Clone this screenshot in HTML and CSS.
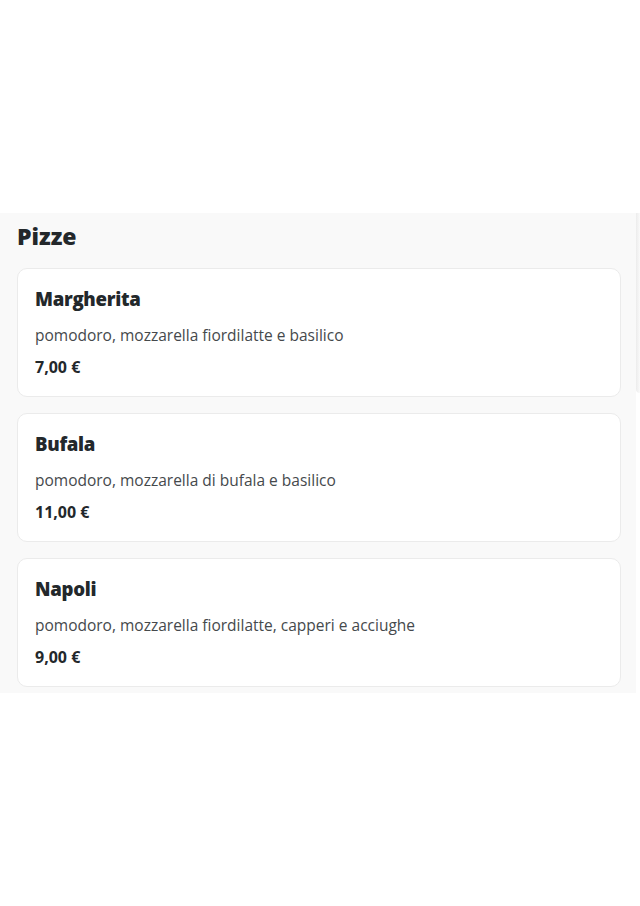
FILE: index.html
```html
<!DOCTYPE html>
<html lang="it">
<head>
<meta charset="utf-8">
<title>Pizze</title>
<link rel="stylesheet" href="styles.css">
</head>
<body>
<div class="top-space"></div>
<section class="panel">
  <div class="peek"></div>
  <h2 class="section-title">Pizze</h2>
  <div class="list">
    <article class="card">
      <h3 class="card-title">Margherita</h3>
      <p class="card-desc">pomodoro, mozzarella fiordilatte e basilico</p>
      <p class="card-price">7,00 €</p>
    </article>
    <article class="card">
      <h3 class="card-title">Bufala</h3>
      <p class="card-desc">pomodoro, mozzarella di bufala e basilico</p>
      <p class="card-price">11,00 €</p>
    </article>
    <article class="card">
      <h3 class="card-title">Napoli</h3>
      <p class="card-desc">pomodoro, mozzarella fiordilatte, capperi e acciughe</p>
      <p class="card-price">9,00 €</p>
    </article>
  </div>
</section>
</body>
</html>
```
FILE: styles.css
```css
html, body {
  margin: 0;
  padding: 0;
  background: #ffffff;
}
body {
  font-family: "Open Sans", "Noto Sans", sans-serif;
  color: #222629;
  width: 640px;
  overflow: hidden;
}
.top-space {
  height: 213px;
}
.panel {
  position: relative;
  background: #f9f9f9;
  width: 636px;
  padding: 9px 15px 6px 17px;
  box-sizing: border-box;
}
.peek {
  position: absolute;
  left: 636px;
  top: 0;
  width: 4px;
  height: 180px;
  background: linear-gradient(to right, #ececec, #fafafa);
  border-bottom-left-radius: 4px;
}
.section-title {
  margin: 0 0 18px 0;
  font-size: 23px;
  line-height: 28px;
  font-weight: 800;
  color: #23282b;
  letter-spacing: 0;
}
.list {
  display: flex;
  flex-direction: column;
  gap: 16px;
}
.card {
  background: #ffffff;
  border: 1px solid #ebebeb;
  border-radius: 10px;
  padding: 18px 17px 18px 17px;
}
.card-title {
  margin: 0;
  font-size: 18.6px;
  line-height: 24px;
  font-weight: 800;
  letter-spacing: -0.3px;
  color: #23282b;
}
.card-desc {
  margin: 13px 0 0 0;
  font-size: 15.5px;
  line-height: 22px;
  font-weight: 400;
  color: #45494c;
}
.card-price {
  margin: 10px 0 0 0;
  font-size: 16px;
  line-height: 22px;
  font-weight: 700;
  color: #23282b;
}
```
